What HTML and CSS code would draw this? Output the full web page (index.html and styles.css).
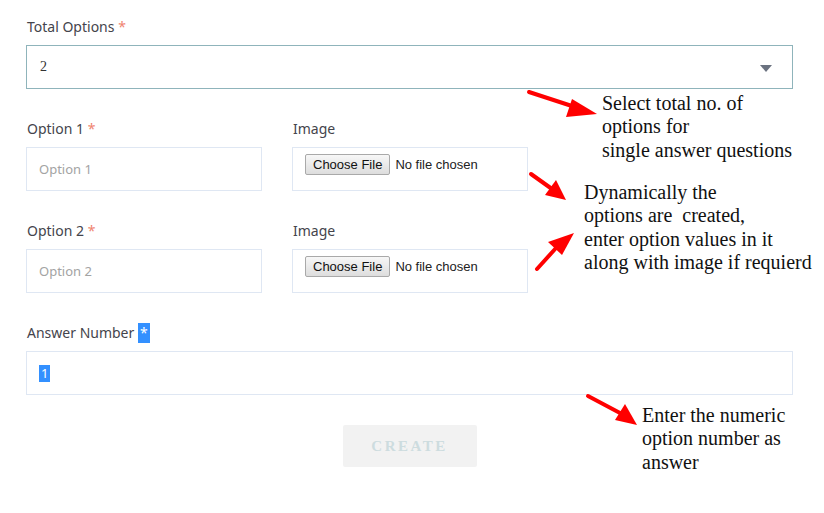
FILE: index.html
```html
<!DOCTYPE html>
<html lang="en">
<head>
<meta charset="utf-8">
<title>Create Question</title>
<link rel="stylesheet" href="styles.css">
</head>
<body>
<div class="page">
  <form class="form">
    <div class="field">
      <label class="label">Total Options <span class="req">*</span></label>
      <div class="select">
        <span class="select-value">2</span>
        <span class="caret"></span>
      </div>
    </div>

    <div class="row">
      <div class="field">
        <label class="label">Option 1 <span class="req">*</span></label>
        <input class="input" type="text" placeholder="Option 1">
      </div>
      <div class="field">
        <label class="label">Image</label>
        <div class="filebox"><input class="file" type="file"></div>
      </div>
    </div>

    <div class="row">
      <div class="field">
        <label class="label">Option 2 <span class="req">*</span></label>
        <input class="input" type="text" placeholder="Option 2">
      </div>
      <div class="field">
        <label class="label">Image</label>
        <div class="filebox"><input class="file" type="file"></div>
      </div>
    </div>

    <div class="field">
      <label class="label">Answer Number <span class="sel">*</span></label>
      <div class="input answer"><span class="sel sel-num">1</span></div>
    </div>

    <div class="actions">
      <button type="button" class="btn">CREATE</button>
    </div>
  </form>

  <svg class="arrows" width="824" height="513" viewBox="0 0 824 513">
    <g stroke="#ff0000" stroke-width="4" stroke-linecap="round" fill="#ff0000">
      <line x1="529" y1="92" x2="578" y2="108"/>
      <polygon points="597,114 572,99 566,117" stroke="none"/>
      <line x1="531" y1="174" x2="552" y2="189"/>
      <polygon points="566,200 556,180 545,195" stroke="none"/>
      <line x1="537" y1="269" x2="556" y2="248"/>
      <polygon points="574,233 548,242 562,255" stroke="none"/>
      <line x1="588" y1="396" x2="620" y2="413"/>
      <polygon points="637,425 625,404 615,420" stroke="none"/>
    </g>
  </svg>

  <p class="note note-1">Select total no. of<br>options for<br>single answer questions</p>
  <p class="note note-2">Dynamically the<br>options are&nbsp; created,<br>enter option values in it<br>along with image if requierd</p>
  <p class="note note-3">Enter the numeric<br>option number as<br>answer</p>
</div>
</body>
</html>
```

FILE: styles.css
```css
* { box-sizing: border-box; }

html, body {
  margin: 0;
  padding: 0;
  background: #ffffff;
}

.page {
  position: relative;
  width: 824px;
  height: 513px;
  overflow: hidden;
  font-family: "Noto Sans", "Open Sans", sans-serif;
}

.form {
  width: 767px;
  margin-left: 26px;
  padding-top: 17px;
  display: flex;
  flex-direction: column;
  gap: 30px;
}

.field {
  display: flex;
  flex-direction: column;
}

.label {
  font-size: 14px;
  line-height: 20px;
  height: 20px;
  color: #44444c;
  margin-bottom: 8px;
  padding-left: 1px;
}

.req {
  color: #f0846f;
}

.select {
  height: 44px;
  border: 1px solid #8fb4bb;
  display: flex;
  align-items: center;
  justify-content: space-between;
  padding: 0 20px 0 13px;
}

.select-value {
  font-family: "Liberation Serif", serif;
  font-size: 14px;
  color: #333;
}

.caret {
  width: 0;
  height: 0;
  border-left: 6px solid transparent;
  border-right: 6px solid transparent;
  border-top: 7px solid #6b7280;
  margin-top: 2px;
}

.row {
  display: grid;
  grid-template-columns: 236px 236px;
  column-gap: 30px;
}

.input {
  height: 44px;
  width: 100%;
  border: 1px solid #dfe7f3;
  padding: 0 12px;
  font-family: "Noto Sans", sans-serif;
  font-size: 13px;
  color: #333;
  background: #fff;
  outline: none;
}

.input::placeholder {
  color: #a3a3a3;
}

.filebox {
  height: 44px;
  border: 1px solid #dfe7f3;
  padding: 4px 12px 0;
}

.file {
  font-family: "Liberation Sans", Arial, sans-serif;
  font-size: 13px;
  color: #222;
}

.file::file-selector-button {
  font-family: "Liberation Sans", Arial, sans-serif;
  font-size: 13px;
  color: #111;
  height: 21px;
  padding: 0 7px;
  margin-right: 5px;
  border: 1px solid #a9a9a9;
  border-radius: 2px;
  background: linear-gradient(#f7f7f7, #dddddd);
}

.answer {
  display: flex;
  align-items: center;
}

.sel {
  background: #3390ff;
  color: #ffffff;
}

.label .sel {
  display: inline-block;
  height: 20px;
  padding: 0 2px;
}

.sel-num {
  display: inline-block;
  line-height: 17px;
  padding: 0 2px;
}

.actions {
  display: flex;
  justify-content: center;
}

.btn {
  width: 134px;
  height: 42px;
  border: none;
  border-radius: 2px;
  background: #f2f2f2;
  color: #cddcdf;
  font-family: "Liberation Serif", serif;
  font-weight: bold;
  font-size: 15px;
  letter-spacing: 2.5px;
  padding: 0;
}

.arrows {
  position: absolute;
  left: 0;
  top: 0;
  pointer-events: none;
}

.note {
  position: absolute;
  margin: 0;
  font-family: "Liberation Serif", "Times New Roman", serif;
  font-size: 20px;
  line-height: 23.3px;
  color: #111;
  white-space: nowrap;
}

.note-1 { left: 602px; top: 92px; }
.note-2 { left: 584px; top: 181px; }
.note-3 { left: 642px; top: 404px; }
```
